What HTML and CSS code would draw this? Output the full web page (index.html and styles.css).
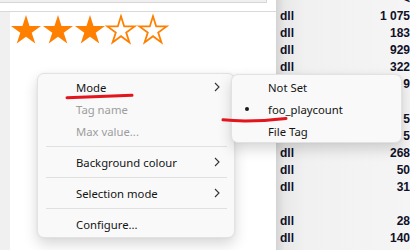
FILE: index.html
```html
<!DOCTYPE html>
<html lang="en">
<head>
    <meta charset="UTF-8">
    <title>Rating panel - context menu</title>
    <link rel="stylesheet" href="styles.css">
</head>
<body>

<div class="window">
    <div class="left-pane">
        <div class="toolbar"><div class="toolbar-box"></div></div>
        <div class="rating-area">
            <div class="gutter"></div>
            <div class="stars">
                <svg class="star" viewBox="-1 -1 32 31"><polygon class="full" points="15,0 18.54,10.89 30,10.9 20.73,17.63 24.27,28.53 15,21.8 5.73,28.53 9.27,17.63 0,10.9 11.46,10.89"/></svg>
                <svg class="star" viewBox="-1 -1 32 31"><polygon class="full" points="15,0 18.54,10.89 30,10.9 20.73,17.63 24.27,28.53 15,21.8 5.73,28.53 9.27,17.63 0,10.9 11.46,10.89"/></svg>
                <svg class="star" viewBox="-1 -1 32 31"><polygon class="full" points="15,0 18.54,10.89 30,10.9 20.73,17.63 24.27,28.53 15,21.8 5.73,28.53 9.27,17.63 0,10.9 11.46,10.89"/></svg>
                <svg class="star" viewBox="-1 -1 32 31"><polygon class="empty" points="15,1.2 18.2,11.4 28.6,11.4 20.2,17.5 23.4,27.4 15,21.2 6.6,27.4 9.8,17.5 1.4,11.4 11.8,11.4"/></svg>
                <svg class="star" viewBox="-1 -1 32 31"><polygon class="empty" points="15,1.2 18.2,11.4 28.6,11.4 20.2,17.5 23.4,27.4 15,21.2 6.6,27.4 9.8,17.5 1.4,11.4 11.8,11.4"/></svg>
            </div>
        </div>
    </div>

    <div class="list-pane">
        <div class="row"><span class="ext"></span><span class="num na">&lt;na</span></div>
        <div class="row"><span class="ext">dll</span><span class="num">1 075</span></div>
        <div class="row"><span class="ext">dll</span><span class="num">183</span></div>
        <div class="row"><span class="ext">dll</span><span class="num">929</span></div>
        <div class="row"><span class="ext">dll</span><span class="num">322</span></div>
        <!-- these rows sit under the submenu, only the last digit shows -->
        <div class="row"><span class="ext"></span><span class="num">9</span></div>
        <div class="row"><span class="ext"></span><span class="num"></span></div>
        <div class="row"><span class="ext"></span><span class="num">5</span></div>
        <div class="row"><span class="ext"></span><span class="num">5</span></div>
        <div class="row"><span class="ext">dll</span><span class="num">268</span></div>
        <div class="row"><span class="ext">dll</span><span class="num">50</span></div>
        <div class="row"><span class="ext">dll</span><span class="num">31</span></div>
        <div class="row"><span class="ext"></span><span class="num"></span></div>
        <div class="row"><span class="ext">dll</span><span class="num">28</span></div>
        <div class="row"><span class="ext">dll</span><span class="num">140</span></div>
    </div>
</div>

<div class="menu main-menu">
    <div class="item">Mode<svg class="chevron" viewBox="0 0 6 10"><path d="M1 1 L5 5 L1 9"/></svg></div>
    <div class="item disabled">Tag name</div>
    <div class="item disabled">Max value...</div>
    <div class="separator"></div>
    <div class="item">Background colour<svg class="chevron" viewBox="0 0 6 10"><path d="M1 1 L5 5 L1 9"/></svg></div>
    <div class="separator"></div>
    <div class="item">Selection mode<svg class="chevron" viewBox="0 0 6 10"><path d="M1 1 L5 5 L1 9"/></svg></div>
    <div class="separator"></div>
    <div class="item">Configure...</div>
</div>

<div class="menu sub-menu">
    <div class="item"><span class="check"></span>Not Set</div>
    <div class="item"><span class="check"><span class="bullet"></span></span>foo_playcount</div>
    <div class="item"><span class="check"></span>File Tag</div>
</div>

<!-- hand drawn red marks over the screenshot -->
<svg class="marks" viewBox="0 0 410 250">
    <path d="M67 97.8 Q98 96.6 132 95.2"/>
    <path d="M223 119.8 Q248 122.6 286 118.4"/>
</svg>

</body>
</html>
```

FILE: styles.css
```css
body {
    margin: 0;
    width: 410px;
    height: 250px;
    overflow: hidden;
    position: relative;
    background: #ffffff;
}
.window {
    display: flex;
    height: 250px;
}
.left-pane {
    width: 276px;
    border-right: 1px solid #d4d4d4;
    display: flex;
    flex-direction: column;
    background: white;
}
.toolbar {
    height: 11px;
    border-bottom: 1px solid #d9d9d9;
}
.toolbar-box {
    width: 266px;
    height: 2px;
    background: #f0f0f0;
    border-bottom: 1px solid #d6d6d6;
    border-right: 1px solid #d6d6d6;
}
.rating-area {
    flex: 1;
    display: flex;
}
.gutter {
    width: 10px;
    background: #f0f0f0;
}
.stars {
    display: flex;
    padding: 2px 0 0 0;
    align-items: flex-start;
}
.star {
    width: 32px;
    height: 31px;
    margin-right: -0.25px;
}
.star .full {
    fill: #ff8000;
}
.star .empty {
    fill: #ffffff;
    stroke: #ff8000;
    stroke-width: 1.8;
}

.list-pane {
    flex: 1;
    overflow: hidden;
    background: linear-gradient(to right, #d6d6d6 0, #e9e9e9 8px, #f1f1f1 30px, #f5f5f5);
    font-family: "Liberation Sans", Arial, sans-serif;
    font-weight: bold;
    font-size: 12px;
    color: #101028;
    margin-top: -9px;
}
.row {
    display: flex;
    justify-content: space-between;
    height: 17.1px;
    line-height: 17.1px;
    padding: 0 0 0 3px;
    white-space: nowrap;
}
.num {
    width: 40px;
    text-align: right;
}
.num.na {
    text-align: left;
    text-indent: 33px;
}

.menu {
    position: absolute;
    background: #f9f9f9;
    border: 1px solid #e2e2e2;
    border-radius: 7px;
    box-shadow: 0 6px 14px rgba(0, 0, 0, 0.16), 0 0 3px rgba(0, 0, 0, 0.05);
    font-family: "Noto Sans", "Open Sans", sans-serif;
    font-size: 11.3px;
    color: #141414;
    box-sizing: border-box;
}
.main-menu {
    left: 37px;
    top: 73px;
    width: 198px;
    padding: 2px 0;
}
.sub-menu {
    left: 231px;
    top: 74px;
    width: 171px;
    padding: 1px 0 0 0;
}
.item {
    height: 22px;
    display: flex;
    align-items: center;
    justify-content: space-between;
    padding: 0 14px 0 38px;
}
.item.disabled {
    color: #9d9d9d;
}
.sub-menu .item {
    justify-content: flex-start;
    padding: 0;
}
.check {
    width: 36px;
    display: flex;
    align-items: center;
}
.bullet {
    width: 4px;
    height: 4px;
    border-radius: 50%;
    background: #1a1a1a;
    margin-left: 13px;
}
.chevron {
    width: 6px;
    height: 10px;
}
.chevron path {
    fill: none;
    stroke: #333333;
    stroke-width: 1.1;
}
.separator {
    height: 1px;
    background: #e0e0e0;
    margin: 4px 7px 4px 8px;
}

.marks {
    position: absolute;
    left: 0;
    top: 0;
    width: 410px;
    height: 250px;
    pointer-events: none;
}
.marks path {
    fill: none;
    stroke: #e3141c;
    stroke-width: 3;
    stroke-linecap: round;
}
```
